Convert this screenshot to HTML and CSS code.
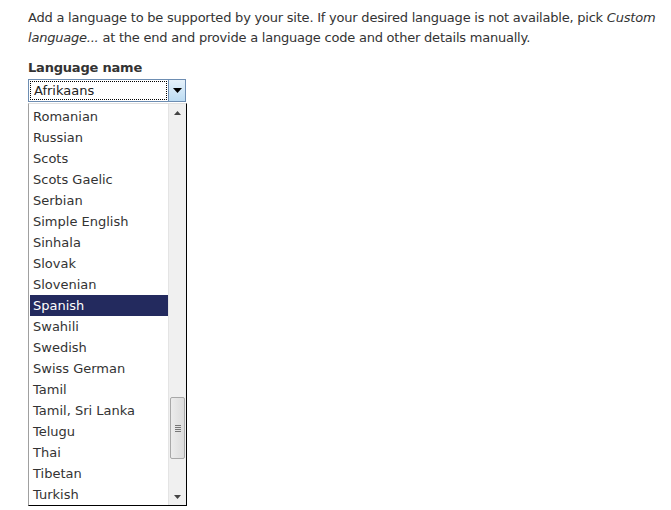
FILE: index.html
```html
<!DOCTYPE html>
<html>
<head>
<meta charset="UTF-8">
<title>Add language</title>
	<link rel="stylesheet" href="styles.css">
</head>
<body>
	<p class="intro">Add a language to be supported by your site. If your desired language is not available, pick <em>Custom language...</em> at the end and provide a language code and other details manually.</p>

	<div class="field">
		<label class="label">Language name</label>
		<div class="select">
			<span class="value">Afrikaans</span>
			<span class="button"><svg width="9" height="5" viewBox="0 0 9 5"><path d="M0 0h9L4.5 5z" fill="#000"/></svg></span>
		</div>
		<div class="list">
			<ul class="options">
				<li>Romanian</li>
				<li>Russian</li>
				<li>Scots</li>
				<li>Scots Gaelic</li>
				<li>Serbian</li>
				<li>Simple English</li>
				<li>Sinhala</li>
				<li>Slovak</li>
				<li>Slovenian</li>
				<li class="selected">Spanish</li>
				<li>Swahili</li>
				<li>Swedish</li>
				<li>Swiss German</li>
				<li>Tamil</li>
				<li>Tamil, Sri Lanka</li>
				<li>Telugu</li>
				<li>Thai</li>
				<li>Tibetan</li>
				<li>Turkish</li>
			</ul>
			<div class="scroll">
				<span class="arrow up"><svg width="7" height="4" viewBox="0 0 7 4"><path d="M3.5 0L7 4H0z" fill="#444"/></svg></span>
				<div class="track">
					<div class="thumb"><span class="grip"></span></div>
				</div>
				<span class="arrow down"><svg width="7" height="4" viewBox="0 0 7 4"><path d="M0 0h7L3.5 4z" fill="#444"/></svg></span>
			</div>
		</div>
	</div>
</body>
</html>
```

FILE: styles.css
```css
body{
	margin: 0;
	padding: 8px 0 0 28px;
	font-family: "DejaVu Sans", Verdana, sans-serif;
	font-size: 13px;
	color: #333;
	background: #fff;
}
.intro{
	margin: 0;
	line-height: 20px;
	letter-spacing: -0.22px;
	width: 636px;
}
.field{
	margin-top: 11px;
}
.label{
	display: block;
	font-weight: bold;
	line-height: 18px;
	margin-bottom: 2px;
	letter-spacing: -0.2px;
}
.select{
	display: flex;
	width: 158px;
	height: 23px;
	box-sizing: border-box;
	border: 1px solid #6d8db2;
}
.value{
	flex: 1;
	border: 1px dotted #000;
	margin: 1px;
	padding-left: 3px;
	line-height: 18px;
	color: #222;
}
.button{
	width: 16px;
	display: flex;
	align-items: center;
	justify-content: center;
	border-left: 1px solid #6d8db2;
	background: linear-gradient(#e6f2fb, #bcdcf3);
}
.list{
	display: flex;
	width: 159px;
	height: 403px;
	box-sizing: border-box;
	margin-top: 1px;
	border-left: 1px solid #a0a0a0;
	border-top: 1px solid #e0e0e0;
	border-right: 1px solid #000;
	border-bottom: 1px solid #000;
	overflow: hidden;
}
.options{
	list-style: none;
	margin: 0;
	padding: 2px 0 0 1px;
	flex: 1;
}
.options li{
	height: 21px;
	line-height: 21px;
	padding-left: 3px;
	color: #333;
}
.options li.selected{
	background: #232a5e;
	color: #fff;
}
.scroll{
	width: 17px;
	display: flex;
	flex-direction: column;
	background: #f0f0f0;
	border-left: 1px solid #e4e4e4;
}
.arrow{
	height: 17px;
	display: flex;
	align-items: center;
	justify-content: center;
}
.track{
	flex: 1;
	position: relative;
}
.thumb{
	position: absolute;
	left: 1px;
	right: 1px;
	top: 276px;
	height: 60px;
	border: 1px solid #a8a8a8;
	border-radius: 2px;
	background: linear-gradient(90deg, #ececec, #dcdcdc);
	display: flex;
	align-items: center;
	justify-content: center;
}
.grip{
	width: 6px;
	height: 7px;
	background: repeating-linear-gradient(#777 0 1px, transparent 1px 2px);
}
```
